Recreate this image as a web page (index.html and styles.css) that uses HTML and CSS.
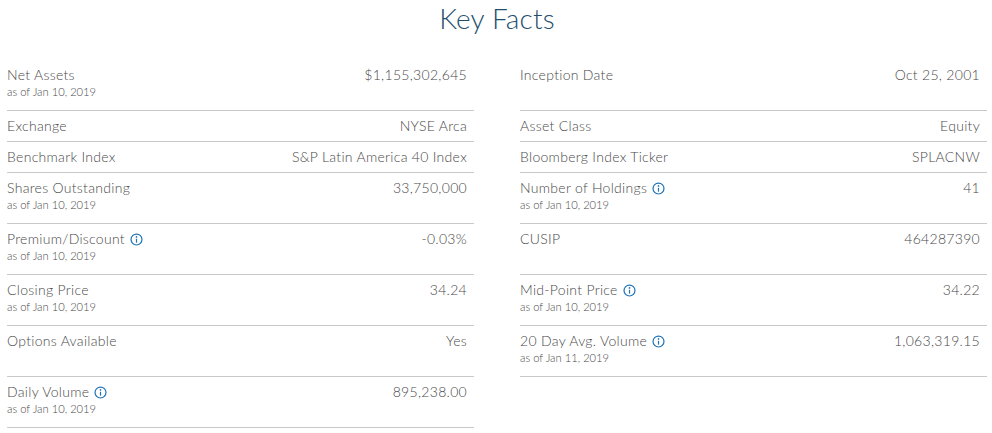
FILE: index.html
```html
<!DOCTYPE html>
<html lang="en">
<head>
<meta charset="utf-8">
<title>Key Facts</title>
<link rel="stylesheet" href="styles.css">
</head>
<body>
<section class="key-facts">
  <h1 class="title">Key Facts</h1>
  <div class="grid">
    <div class="item"><div class="label-col"><div class="label">Net Assets</div><div class="sub">as of Jan 10, 2019</div></div><div class="value">$1,155,302,645</div></div>
    <div class="item"><div class="label-col"><div class="label">Inception Date</div></div><div class="value">Oct 25, 2001</div></div>

    <div class="item"><div class="label-col"><div class="label">Exchange</div></div><div class="value">NYSE Arca</div></div>
    <div class="item"><div class="label-col"><div class="label">Asset Class</div></div><div class="value">Equity</div></div>

    <div class="item"><div class="label-col"><div class="label">Benchmark Index</div></div><div class="value">S&amp;P Latin America 40 Index</div></div>
    <div class="item"><div class="label-col"><div class="label">Bloomberg Index Ticker</div></div><div class="value">SPLACNW</div></div>

    <div class="item"><div class="label-col"><div class="label">Shares Outstanding</div><div class="sub">as of Jan 10, 2019</div></div><div class="value">33,750,000</div></div>
    <div class="item"><div class="label-col"><div class="label"><span>Number of Holdings</span><svg class="info" viewBox="0 0 14 14"><circle cx="7" cy="7" r="5.9"/><path d="M7 6.2v4.2"/><circle class="dot" cx="7" cy="4.2" r="0.9"/></svg></div><div class="sub">as of Jan 10, 2019</div></div><div class="value">41</div></div>

    <div class="item"><div class="label-col"><div class="label"><span>Premium/Discount</span><svg class="info" viewBox="0 0 14 14"><circle cx="7" cy="7" r="5.9"/><path d="M7 6.2v4.2"/><circle class="dot" cx="7" cy="4.2" r="0.9"/></svg></div><div class="sub">as of Jan 10, 2019</div></div><div class="value">-0.03%</div></div>
    <div class="item"><div class="label-col"><div class="label">CUSIP</div></div><div class="value">464287390</div></div>

    <div class="item"><div class="label-col"><div class="label">Closing Price</div><div class="sub">as of Jan 10, 2019</div></div><div class="value">34.24</div></div>
    <div class="item"><div class="label-col"><div class="label"><span>Mid-Point Price</span><svg class="info" viewBox="0 0 14 14"><circle cx="7" cy="7" r="5.9"/><path d="M7 6.2v4.2"/><circle class="dot" cx="7" cy="4.2" r="0.9"/></svg></div><div class="sub">as of Jan 10, 2019</div></div><div class="value">34.22</div></div>

    <div class="item"><div class="label-col"><div class="label">Options Available</div></div><div class="value">Yes</div></div>
    <div class="item"><div class="label-col"><div class="label"><span>20 Day Avg. Volume</span><svg class="info" viewBox="0 0 14 14"><circle cx="7" cy="7" r="5.9"/><path d="M7 6.2v4.2"/><circle class="dot" cx="7" cy="4.2" r="0.9"/></svg></div><div class="sub">as of Jan 11, 2019</div></div><div class="value">1,063,319.15</div></div>

    <div class="item"><div class="label-col"><div class="label"><span>Daily Volume</span><svg class="info" viewBox="0 0 14 14"><circle cx="7" cy="7" r="5.9"/><path d="M7 6.2v4.2"/><circle class="dot" cx="7" cy="4.2" r="0.9"/></svg></div><div class="sub">as of Jan 10, 2019</div></div><div class="value">895,238.00</div></div>
  </div>
</section>
</body>
</html>
```

FILE: styles.css
```css
html, body {
  margin: 0;
  padding: 0;
  background: #ffffff;
}

body {
  font-family: "Lato", "Open Sans", "Liberation Sans", sans-serif;
  color: #4a4a4a;
}

.key-facts {
  width: 980px;
  padding-left: 7px;
}

.title {
  margin: 0;
  padding-bottom: 24px;
  font-size: 28px;
  line-height: 36px;
  font-weight: 300;
  color: #244f6c;
  text-align: center;
  letter-spacing: 0.2px;
}

.grid {
  display: grid;
  grid-template-columns: 467px 467px;
  column-gap: 46px;
}

.item {
  display: flex;
  justify-content: space-between;
  align-items: flex-start;
  padding: 5px 7px 5px 0;
  border-bottom: 1px solid #c9c9c9;
}

.label {
  display: flex;
  align-items: center;
  gap: 5px;
  font-size: 14px;
  line-height: 20px;
  font-weight: 300;
  letter-spacing: 0.3px;
}

.sub {
  font-size: 11.2px;
  line-height: 14px;
  margin-bottom: 6px;
  font-weight: 300;
  color: #4a4a4a;
}

.value {
  font-size: 14px;
  line-height: 20px;
  font-weight: 300;
  letter-spacing: 0.3px;
  text-align: right;
}

.info {
  width: 13px;
  height: 13px;
  fill: none;
  stroke: #1f73b7;
  stroke-width: 1.3;
}

.info .dot {
  fill: #1f73b7;
  stroke: none;
}
```
